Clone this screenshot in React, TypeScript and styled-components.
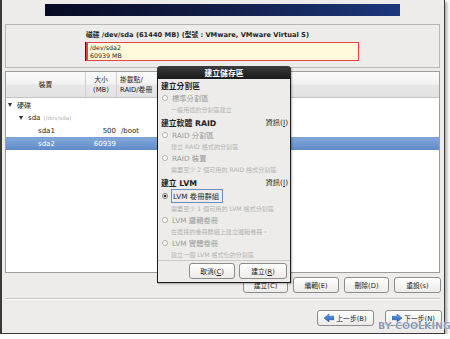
import styled, { createGlobalStyle } from "styled-components";

const GlobalStyle = createGlobalStyle`
  html, body {
    margin: 0;
    padding: 0;
    background: #ffffff;
  }
  body {
    font-family: "DejaVu Sans", "Noto Sans CJK TC", sans-serif;
    color: #1e1e1e;
  }
`;

const Window = styled.div`
  position: relative;
  box-sizing: border-box;
  width: 445px;
  height: 334px;
  background: #edecea;
  border-left: 2px solid #3a3a3a;
  border-right: 1px solid #3a3a3a;
  border-bottom: 1px solid #3a3a3a;
  box-shadow: 2px 2px 3px rgba(0, 0, 0, 0.35);
  padding: 4px 4px 0 3px;
  display: flex;
  flex-direction: column;
`;

const Banner = styled.div`
  align-self: center;
  width: 355px;
  height: 12px;
  background: linear-gradient(90deg, #070b22 0%, #111c44 45%, #1c377c 100%);
`;

const DiskPanel = styled.div`
  margin-top: 8px;
  height: 44px;
  box-sizing: border-box;
  border: 1px solid #b9b7b2;
  padding-top: 6px;
  display: flex;
  justify-content: center;
`;

const DiskInner = styled.div`
  width: 273px;
`;

const DiskTitle = styled.div`
  font-size: 6.7px;
  font-weight: bold;
  line-height: 9px;
  white-space: nowrap;
`;

const Segment = styled.div`
  margin-top: 2px;
  height: 19px;
  box-sizing: border-box;
  background: #fffadc;
  border: 1px solid #e8433f;
  border-left: 2px solid #e8433f;
  box-shadow: -1px 0 0 #222;
  padding: 1px 0 0 2px;
  font-size: 6.3px;
  line-height: 7.5px;
`;

const Table = styled.div`
  margin-top: 3px;
  height: 202px;
  box-sizing: border-box;
  border: 1px solid #9d9d9d;
  background: #ffffff;
  display: flex;
  flex-direction: column;
`;

const HeaderRow = styled.div`
  display: grid;
  grid-template-columns: 80px 31px 1fr;
  height: 25px;
  border-bottom: 1px solid #c2c2c2;
  background: linear-gradient(#fbfbfb 0%, #f2f2f2 48%, #e7e7e7 52%, #e3e3e3 100%);
`;

const HeaderCell = styled.div<{ $align?: string; $last?: boolean }>`
  display: flex;
  flex-direction: column;
  justify-content: center;
  align-items: ${(p) => p.$align || "center"};
  font-size: 6.8px;
  line-height: 10px;
  padding-left: ${(p) => (p.$align ? "3px" : "0")};
  border-right: ${(p) => (p.$last ? "none" : "1px solid #cfcfcf")};
  white-space: nowrap;
  overflow: hidden;
`;

const Row = styled.div<{ $selected?: boolean }>`
  display: grid;
  grid-template-columns: 80px 31px 1fr;
  height: 13px;
  align-items: center;
  font-size: 7px;
  color: ${(p) => (p.$selected ? "#ffffff" : "#1e1e1e")};
  background: ${(p) =>
    p.$selected ? "linear-gradient(#80a7da, #5f8bc6)" : "transparent"};
  border-top: ${(p) => (p.$selected ? "1px solid #7a9fd0" : "none")};
  box-sizing: border-box;
`;

const DeviceCell = styled.div<{ $indent: number }>`
  display: flex;
  align-items: center;
  padding-left: ${(p) => p.$indent}px;
  white-space: nowrap;
`;

const Expander = styled.span`
  width: 0;
  height: 0;
  border-left: 2.5px solid transparent;
  border-right: 2.5px solid transparent;
  border-top: 4px solid #333;
  margin-right: 5px;
`;

const Faint = styled.span`
  color: #b5b5b5;
  font-size: 5.5px;
  margin-left: 3px;
`;

const SizeCell = styled.div`
  text-align: right;
  padding-right: 1px;
`;

const MountCell = styled.div`
  padding-left: 4px;
`;

const ActionRow = styled.div`
  display: flex;
  justify-content: flex-end;
  gap: 5px;
  margin-top: 4px;
  margin-right: -1px;
`;

const Button = styled.div<{ $width: number }>`
  width: ${(p) => p.$width}px;
  height: 16px;
  box-sizing: border-box;
  border: 1px solid #8c8c8c;
  border-radius: 3px;
  background: linear-gradient(#ffffff, #ecebe9);
  display: flex;
  align-items: center;
  justify-content: center;
  gap: 2px;
  font-size: 6.8px;
  color: #222;
  white-space: nowrap;
`;

const Separator = styled.div`
  margin-top: 5px;
  height: 1px;
  background: #c6c5c2;
  border-bottom: 1px solid #fafafa;
`;

const NavRow = styled.div`
  display: flex;
  justify-content: flex-end;
  gap: 11px;
  margin-top: 10px;
  margin-right: -2px;
`;

const Dialog = styled.div`
  position: absolute;
  left: 155px;
  top: 66px;
  width: 134px;
  height: 217px;
  box-sizing: border-box;
  border: 1px solid #1c1c1c;
  border-top: none;
  border-radius: 4px 4px 0 0;
  background: #edecea;
  display: flex;
  flex-direction: column;
  box-shadow: 1px 1px 2px rgba(0, 0, 0, 0.3);
`;

const DialogTitle = styled.div`
  height: 13px;
  border-radius: 4px 4px 0 0;
  background: linear-gradient(#3c3c3c, #1a1a1a);
  color: #ffffff;
  font-size: 7.8px;
  font-weight: bold;
  display: flex;
  align-items: center;
  justify-content: center;
  margin: 0 -1px;
`;

const DialogBody = styled.div`
  padding: 0 2px 0 3px;
  display: flex;
  flex-direction: column;
`;

const Heading = styled.div<{ $h: number }>`
  height: ${(p) => p.$h}px;
  display: flex;
  align-items: center;
  justify-content: space-between;
  font-size: 7.8px;
  font-weight: bold;
`;

const InfoLink = styled.span`
  font-weight: normal;
  font-size: 7.3px;
`;

const RadioRow = styled.div<{ $h?: number; $disabled?: boolean }>`
  height: ${(p) => p.$h || 12}px;
  display: flex;
  align-items: center;
  font-size: 7.3px;
  color: ${(p) => (p.$disabled ? "#9a9a9a" : "#1e1e1e")};
`;

const Radio = styled.span<{ $checked?: boolean }>`
  width: 6px;
  height: 6px;
  margin-left: 1px;
  margin-right: 4px;
  box-sizing: border-box;
  border-radius: 50%;
  border: 1px solid ${(p) => (p.$checked ? "#777" : "#b0b0b0")};
  background: ${(p) =>
    p.$checked ? "radial-gradient(circle, #222 0 1.3px, #fff 1.6px)" : "#fff"};
`;

const Focus = styled.span`
  border: 1px solid #6a8cc0;
  padding: 1px 3px 1px 1px;
  margin-left: -1px;
`;

const Sub = styled.div`
  height: 11px;
  display: flex;
  align-items: center;
  padding-left: 10px;
  font-size: 6.1px;
  color: #b3b3b3;
  white-space: nowrap;
`;

const DialogSeparator = styled.div`
  margin: 0 -2px 0 -3px;
  height: 1px;
  background: #cbc9c5;
`;

const DialogButtons = styled.div`
  display: flex;
  justify-content: flex-end;
  gap: 4px;
  margin-top: 2px;
  padding-right: 1px;
`;

const Watermark = styled.div`
  position: absolute;
  left: 376px;
  top: 320px;
  font-family: "DejaVu Sans", sans-serif;
  font-size: 9.5px;
  font-weight: bold;
  color: #8a9ab2;
  text-shadow: 0 0 1px #fff, 0 0 1px #fff;
  white-space: nowrap;
`;

const Arrow = ({ dir }: { dir: "left" | "right" }) => (
  <svg width="10" height="8" viewBox="0 0 10 8">
    <defs>
      <linearGradient id={`g-${dir}`} x1="0" y1="0" x2="0" y2="1">
        <stop offset="0" stopColor="#6aa6ea" />
        <stop offset="1" stopColor="#1f5fb8" />
      </linearGradient>
    </defs>
    <polygon
      points={
        dir === "left"
          ? "0,4 5,0 5,2.3 10,2.3 10,5.7 5,5.7 5,8"
          : "10,4 5,0 5,2.3 0,2.3 0,5.7 5,5.7 5,8"
      }
      fill={`url(#g-${dir})`}
      stroke="#1d4f96"
      strokeWidth="0.5"
    />
  </svg>
);

export default function App() {
  return (
    <>
      <GlobalStyle />
      <Window>
        <Banner />
        <DiskPanel>
          <DiskInner>
            <DiskTitle>磁碟 /dev/sda (61440 MB) (型號 : VMware, VMware Virtual S)</DiskTitle>
            <Segment>
              /dev/sda2
              <br />
              60939 MB
            </Segment>
          </DiskInner>
        </DiskPanel>

        <Table>
          <HeaderRow>
            <HeaderCell>裝置</HeaderCell>
            <HeaderCell>
              <span>大小</span>
              <span>(MB)</span>
            </HeaderCell>
            <HeaderCell $align="flex-start" $last>
              <span>掛載點/</span>
              <span>RAID/卷冊</span>
            </HeaderCell>
          </HeaderRow>
          <Row>
            <DeviceCell $indent={2}>
              <Expander />
              硬碟
            </DeviceCell>
          </Row>
          <Row>
            <DeviceCell $indent={13}>
              <Expander />
              sda<Faint>(/dev/sda)</Faint>
            </DeviceCell>
          </Row>
          <Row>
            <DeviceCell $indent={32}>sda1</DeviceCell>
            <SizeCell>500</SizeCell>
            <MountCell>/boot</MountCell>
          </Row>
          <Row $selected>
            <DeviceCell $indent={32}>sda2</DeviceCell>
            <SizeCell>60939</SizeCell>
            <MountCell />
          </Row>
        </Table>

        <ActionRow>
          <Button $width={45}>建立(C)</Button>
          <Button $width={46}>編輯(E)</Button>
          <Button $width={45}>刪除(D)</Button>
          <Button $width={47}>重設(s)</Button>
        </ActionRow>

        <Separator />

        <NavRow>
          <Button $width={57}>
            <Arrow dir="left" />
            上一步(B)
          </Button>
          <Button $width={57}>
            <Arrow dir="right" />
            下一步(N)
          </Button>
        </NavRow>

        <Dialog>
          <DialogTitle>建立儲存區</DialogTitle>
          <DialogBody>
            <Heading $h={13}>建立分割區</Heading>
            <RadioRow $disabled>
              <Radio />
              標準分割區
            </RadioRow>
            <Sub>一般用途的分割區建立</Sub>

            <Heading $h={14}>
              建立軟體 RAID
              <InfoLink>
                資訊(<u>I</u>)
              </InfoLink>
            </Heading>
            <RadioRow $disabled>
              <Radio />
              RAID 分割區
            </RadioRow>
            <Sub>建立 RAID 格式的分割區</Sub>
            <RadioRow $disabled>
              <Radio />
              RAID 裝置
            </RadioRow>
            <Sub>需要至少 2 個可用的 RAID 格式分割區</Sub>

            <Heading $h={14}>
              建立 LVM
              <InfoLink>
                資訊(<u>I</u>)
              </InfoLink>
            </Heading>
            <RadioRow $h={14}>
              <Radio $checked />
              <Focus>LVM 卷冊群組</Focus>
            </RadioRow>
            <Sub>需要至少 1 個可用的 LVM 格式分割區</Sub>
            <RadioRow $disabled>
              <Radio />
              LVM 邏輯卷冊
            </RadioRow>
            <Sub>在選擇的卷冊群組上建立邏輯卷冊。</Sub>
            <RadioRow $disabled>
              <Radio />
              LVM 實體卷冊
            </RadioRow>
            <Sub>建立一個 LVM 格式化的分割區</Sub>

            <DialogSeparator />
            <DialogButtons>
              <Button $width={46}>
                <span>
                  取消(<u>C</u>)
                </span>
              </Button>
              <Button $width={48}>
                <span>
                  建立(<u>R</u>)
                </span>
              </Button>
            </DialogButtons>
          </DialogBody>
        </Dialog>

        <Watermark>BY COOLKING</Watermark>
      </Window>
    </>
  );
}
